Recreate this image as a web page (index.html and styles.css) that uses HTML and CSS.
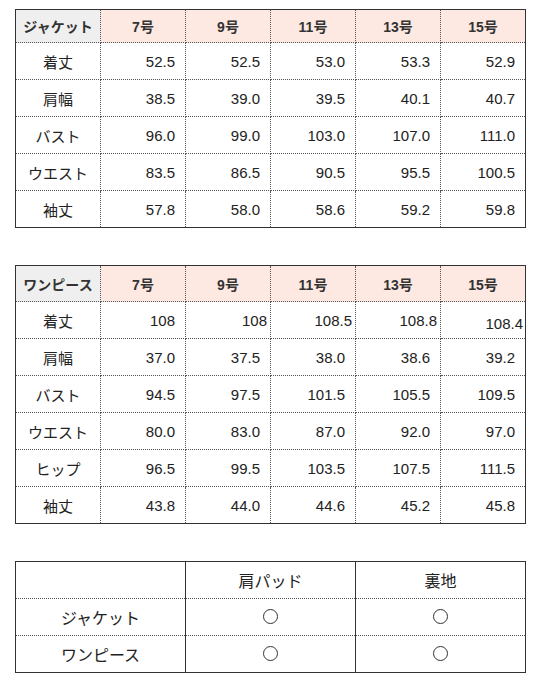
FILE: index.html
```html
<!DOCTYPE html>
<html lang="ja">
<head>
<meta charset="utf-8">
<link rel="stylesheet" href="styles.css">
</head>
<body>
<div class="page">
  <table class="size">
    <tr class="head h1">
      <th class="corner">ジャケット</th><th>7号</th><th>9号</th><th>11号</th><th>13号</th><th>15号</th>
    </tr>
    <tr><td class="label">着丈</td><td>52.5</td><td>52.5</td><td>53.0</td><td>53.3</td><td>52.9</td></tr>
    <tr><td class="label">肩幅</td><td>38.5</td><td>39.0</td><td>39.5</td><td>40.1</td><td>40.7</td></tr>
    <tr><td class="label">バスト</td><td>96.0</td><td>99.0</td><td>103.0</td><td>107.0</td><td>111.0</td></tr>
    <tr><td class="label">ウエスト</td><td>83.5</td><td>86.5</td><td>90.5</td><td>95.5</td><td>100.5</td></tr>
    <tr><td class="label">袖丈</td><td>57.8</td><td>58.0</td><td>58.6</td><td>59.2</td><td>59.8</td></tr>
  </table>

  <table class="size">
    <tr class="head h2">
      <th class="corner">ワンピース</th><th>7号</th><th>9号</th><th>11号</th><th>13号</th><th>15号</th>
    </tr>
    <tr><td class="label">着丈</td><td>108</td><td class="tight">108</td><td class="tight">108.5</td><td class="tight">108.8</td><td class="edge">108.4</td></tr>
    <tr><td class="label">肩幅</td><td>37.0</td><td>37.5</td><td>38.0</td><td>38.6</td><td>39.2</td></tr>
    <tr><td class="label">バスト</td><td>94.5</td><td>97.5</td><td>101.5</td><td>105.5</td><td>109.5</td></tr>
    <tr><td class="label">ウエスト</td><td>80.0</td><td>83.0</td><td>87.0</td><td>92.0</td><td>97.0</td></tr>
    <tr><td class="label">ヒップ</td><td>96.5</td><td>99.5</td><td>103.5</td><td>107.5</td><td>111.5</td></tr>
    <tr><td class="label">袖丈</td><td>43.8</td><td>44.0</td><td>44.6</td><td>45.2</td><td>45.8</td></tr>
  </table>

  <table class="spec">
    <tr><td></td><td>肩パッド</td><td>裏地</td></tr>
    <tr><td>ジャケット</td><td><span class="circle" aria-label="○"></span></td><td><span class="circle" aria-label="○"></span></td></tr>
    <tr><td>ワンピース</td><td><span class="circle" aria-label="○"></span></td><td><span class="circle" aria-label="○"></span></td></tr>
  </table>
</div>
</body>
</html>
```

FILE: styles.css
```css
html, body {
  margin: 0;
  padding: 0;
  background: #ffffff;
}

.page {
  padding: 9px 0 0 15px;
  display: flex;
  flex-direction: column;
  gap: 37px;
  font-family: "Liberation Sans", "Noto Sans CJK JP", sans-serif;
  color: #222;
}

table {
  border-collapse: collapse;
  table-layout: fixed;
  width: 511px;
  border: 1px solid #333;
}

.size td,
.size th {
  width: 85px;
  height: 37px;
  padding: 0 10px 0 0;
  border: 1px dotted #555;
  font-size: 15px;
  text-align: right;
  vertical-align: middle;
  box-sizing: border-box;
}

.size .head th {
  text-align: center;
  padding: 0;
  background: #fde9e2;
  font-weight: bold;
  font-size: 14px;
  color: #333;
}

.size .head.h1 th {
  height: 33px;
}

.size .head.h2 th {
  height: 36px;
}

.size .head th.corner {
  background: #efefef;
}

.size td.label {
  text-align: center;
  padding: 0;
  font-size: 15px;
}

.size td.tight {
  padding-right: 3px;
}

.size td.edge {
  padding: 6px 2px 0 0;
}

.spec td {
  width: 170px;
  height: 37px;
  border-top: 1px dotted #555;
  border-bottom: 1px dotted #555;
  border-left: 1px solid #333;
  border-right: 1px solid #333;
  text-align: center;
  vertical-align: middle;
  font-size: 16px;
  padding: 0;
  box-sizing: border-box;
}

.circle {
  display: inline-block;
  width: 13px;
  height: 13px;
  border: 1px solid #333;
  border-radius: 50%;
  vertical-align: middle;
  margin-top: -2px;
}
```
